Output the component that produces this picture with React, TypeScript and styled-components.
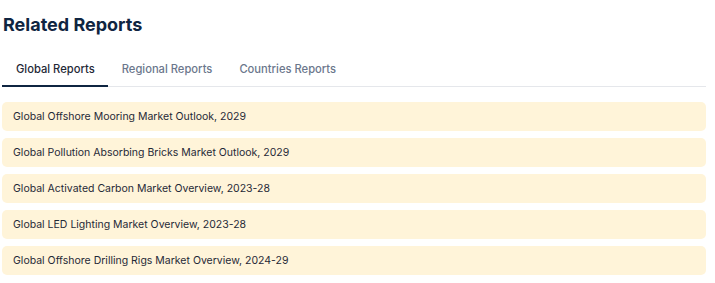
import React, { useState } from "react";
import styled, { createGlobalStyle } from "styled-components";

const Global = createGlobalStyle`
  * { box-sizing: border-box; }
  body {
    margin: 0;
    background: #ffffff;
    font-family: Inter, "Noto Sans", Arial, sans-serif;
  }
`;

const Section = styled.section`
  width: 706px;
  padding: 13px 0 0 2px;
  display: flex;
  flex-direction: column;
`;

const Title = styled.h2`
  margin: 0 0 0 1px;
  font-size: 18px;
  line-height: 24px;
  font-weight: 700;
  color: #0f2541;
`;

const TabBar = styled.div`
  display: flex;
  margin-top: 20px;
  border-bottom: 1px solid #e5e7eb;
`;

const Tab = styled.button<{ $active?: boolean }>`
  background: none;
  border: none;
  margin: 0 0 -1px 0;
  padding: 5px 13px 9px 14px;
  font-family: inherit;
  font-size: 11.2px;
  line-height: 14px;
  font-weight: 500;
  cursor: pointer;
  color: ${(p) => (p.$active ? "#1f2937" : "#6b778c")};
  border-bottom: 2px solid ${(p) => (p.$active ? "#0f2541" : "transparent")};
`;

const List = styled.ul`
  list-style: none;
  margin: 15px 0 0 0;
  padding: 0;
  display: flex;
  flex-direction: column;
  gap: 7px;
`;

const Item = styled.li`
  height: 29px;
  display: flex;
  align-items: center;
  padding: 0 11px;
  background: #fff4d9;
  border-radius: 5px;
  font-size: 10.5px;
  color: #1f2937;
`;

const tabs = ["Global Reports", "Regional Reports", "Countries Reports"];
const reports = [
  "Global Offshore Mooring Market Outlook, 2029",
  "Global Pollution Absorbing Bricks Market Outlook, 2029",
  "Global Activated Carbon Market Overview, 2023-28",
  "Global LED Lighting Market Overview, 2023-28",
  "Global Offshore Drilling Rigs Market Overview, 2024-29",
];

export default function App() {
  const [active, setActive] = useState(0);
  return (
    <>
      <Global />
      <Section>
        <Title>Related Reports</Title>
        <TabBar>
          {tabs.map((t, i) => (
            <Tab key={t} $active={i === active} onClick={() => setActive(i)}>
              {t}
            </Tab>
          ))}
        </TabBar>
        <List>
          {reports.map((r) => (
            <Item key={r}>{r}</Item>
          ))}
        </List>
      </Section>
    </>
  );
}
